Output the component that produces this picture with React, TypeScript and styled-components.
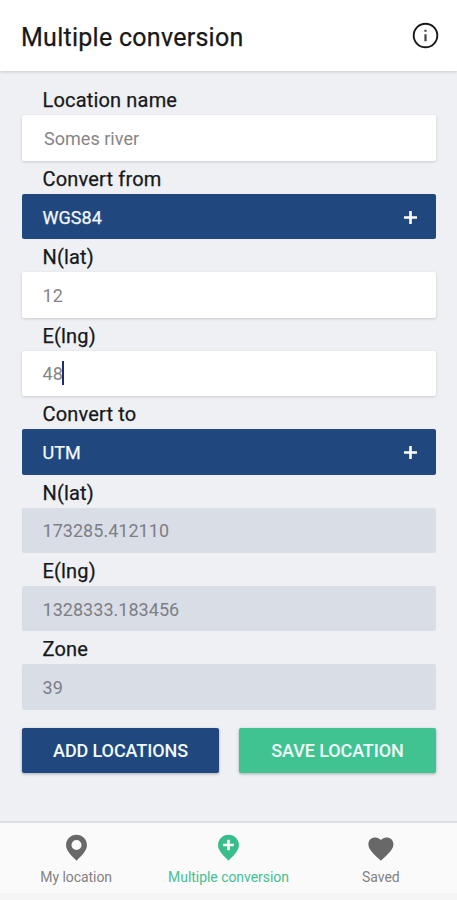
import React from "react";
import styled, { createGlobalStyle } from "styled-components";

const GlobalStyle = createGlobalStyle`
  * { box-sizing: border-box; }
  body { margin: 0; background: #eef0f4; font-family: Roboto, sans-serif; }
`;

const Screen = styled.div`
  display: flex;
  flex-direction: column;
  width: 100%;
  height: 900px;
  overflow: hidden;
  background: #eef0f4;
`;

const Header = styled.header`
  display: flex;
  flex: none;
  align-items: center;
  justify-content: space-between;
  height: 71px;
  padding: 4px 18px 0 21px;
  background: #fff;
  box-shadow: 0 1px 3px rgba(0, 0, 0, 0.16);
`;

const Title = styled.h1`
  margin: 0;
  color: #17181a;
  font-size: 25px;
  font-weight: 400;
  line-height: 30px;
  letter-spacing: 0.27px;
  -webkit-text-stroke: 0.25px #17181a;
`;

const InfoButton = styled.button`
  display: flex;
  margin: 0 0 5px;
  padding: 0;
  border: 0;
  background: none;
`;

const Form = styled.main`
  display: flex;
  flex: 1;
  flex-direction: column;
  padding: 11.4px 21px 0 22px;
`;

const Field = styled.section`
  display: flex;
  flex: none;
  flex-direction: column;
  height: 78.45px;
`;

const Label = styled.label`
  height: 33px;
  padding: 6px 0 0 20.5px;
  color: #17181a;
  font-size: 20px;
  font-weight: 400;
  line-height: 25px;
  letter-spacing: 0.17px;
  -webkit-text-stroke: 0.25px #17181a;
`;

type Kind = "input" | "select" | "result";

const surfaces = {
  input: "background: #fff; color: #858585; box-shadow: 0 1px 3px rgba(0, 0, 0, 0.16);",
  select: "background: #21487e; color: #f4f7fb; -webkit-text-stroke: 0.25px #f4f7fb;",
  result: "background: #d9dde6; color: #7c7f85;",
};

const Box = styled.div<{ $kind: Kind; $indent?: number }>`
  display: flex;
  align-items: center;
  height: 45.4px;
  padding: 2px 19px 0 ${(p) => p.$indent ?? 20.5}px;
  border-radius: 2px;
  font-size: 18px;
  line-height: 24px;
  letter-spacing: 0.03px;
  ${(p) => surfaces[p.$kind]}
`;

const Caret = styled.span`
  width: 2px;
  height: 24px;
  margin: -3px 0 0 -1px;
  background: #1c2d72;
`;

const PlusIcon = styled.svg`
  display: block;
  margin: -1px 0 0 auto;
`;

const Actions = styled.div`
  display: grid;
  flex: none;
  grid-template-columns: 1fr 1fr;
  gap: 20px;
  margin-top: 18px;
`;

const Action = styled.button<{ $color: string }>`
  height: 45px;
  padding: 2px 0 0;
  border: 0;
  border-radius: 2px;
  background: ${(p) => p.$color};
  box-shadow: 0 1px 3px rgba(0, 0, 0, 0.3);
  color: #f1fafa;
  font: 500 18px / 24px Roboto, sans-serif;
  letter-spacing: -0.1px;
  white-space: nowrap;
`;

const Nav = styled.nav`
  display: grid;
  flex: none;
  grid-template-columns: repeat(3, 1fr);
  height: 79px;
  padding-top: 9px;
  border-top: 2px solid #dcdde0;
  border-bottom: 7px solid #f5f5f5;
  background: #fafafa;
`;

const Tab = styled.a<{ $active?: boolean }>`
  display: flex;
  flex-direction: column;
  align-items: center;
  color: ${(p) => (p.$active ? "#39be8b" : "#686868")};
`;

const TabIcon = styled.svg`
  display: block;
  width: 31px;
  height: 31px;
`;

const TabLabel = styled.span<{ $active?: boolean }>`
  margin-top: 5px;
  color: ${(p) => (p.$active ? "#45c092" : "#828282")};
  font-size: 14px;
  line-height: 18px;
  letter-spacing: -0.05px;
  white-space: nowrap;
`;

interface FieldData {
  label: string;
  value: string;
  kind: Kind;
  indent?: number;
  focused?: boolean;
}

const fields: FieldData[] = [
  { label: "Location name", value: "Somes river", kind: "input", indent: 22 },
  { label: "Convert from", value: "WGS84", kind: "select" },
  { label: "N(lat)", value: "12", kind: "input" },
  { label: "E(lng)", value: "48", kind: "input", focused: true },
  { label: "Convert to", value: "UTM", kind: "select" },
  { label: "N(lat)", value: "173285.412110", kind: "result" },
  { label: "E(lng)", value: "1328333.183456", kind: "result" },
  { label: "Zone", value: "39", kind: "result" },
];

const pin = "M12 2.2C7.5 2.2 3.9 5.7 3.9 10.1c0 4.7 4.4 8.4 8.1 12.1 3.7-3.7 8.1-7.4 8.1-12.1 0-4.4-3.6-7.9-8.1-7.9z";

const tabs = [
  {
    label: "My location",
    path: pin + "M12 6.2a3.9 3.9 0 1 0 0 7.8 3.9 3.9 0 0 0 0-7.8z",
  },
  {
    label: "Multiple conversion",
    path: pin + "M11 6h2v3.1h3.1v2H13v3.1h-2v-3.1H7.9v-2H11z",
    active: true,
  },
  {
    label: "Saved",
    path: "M12.3 22.3l-1.4-1.32C6 16.3 2.6 13.2 2.6 9.4c0-3.1 2.4-5.2 5.3-5.2 1.7 0 3.3.7 4.4 1.9 1.1-1.2 2.7-1.9 4.4-1.9 2.9 0 5.3 2.1 5.3 5.2 0 3.8-3.4 6.9-8.3 11.58z",
  },
];

export default function App() {
  return (
    <>
      <GlobalStyle />
      <Screen>
        <Header>
          <Title>Multiple conversion</Title>
          <InfoButton aria-label="Information">
            <svg width="27" height="27" viewBox="0 0 27 27" fill="none">
              <circle cx="13.5" cy="13.5" r="11.8" stroke="#17181a" strokeWidth="1.9" />
              <path d="M13.5 7.8v2M13.5 12.2v7" stroke="#444" strokeWidth="2.2" />
            </svg>
          </InfoButton>
        </Header>
        <Form>
          {fields.map((field, index) => (
            <Field key={index}>
              <Label>{field.label}</Label>
              <Box $kind={field.kind} $indent={field.indent}>
                {field.value}
                {field.focused && <Caret />}
                {field.kind === "select" && (
                  <PlusIcon width="13" height="13" viewBox="0 0 13 13">
                    <path d="M6.5 0v13M0 6.5h13" stroke="#fff" strokeWidth="2.6" />
                  </PlusIcon>
                )}
              </Box>
            </Field>
          ))}
          <Actions>
            <Action $color="#21487e">ADD LOCATIONS</Action>
            <Action $color="#40c391">SAVE LOCATION</Action>
          </Actions>
        </Form>
        <Nav>
          {tabs.map((tab) => (
            <Tab key={tab.label} $active={tab.active}>
              <TabIcon viewBox="0 0 24 24">
                <path d={tab.path} fill="currentColor" fillRule="evenodd" />
              </TabIcon>
              <TabLabel $active={tab.active}>{tab.label}</TabLabel>
            </Tab>
          ))}
        </Nav>
      </Screen>
    </>
  );
}
